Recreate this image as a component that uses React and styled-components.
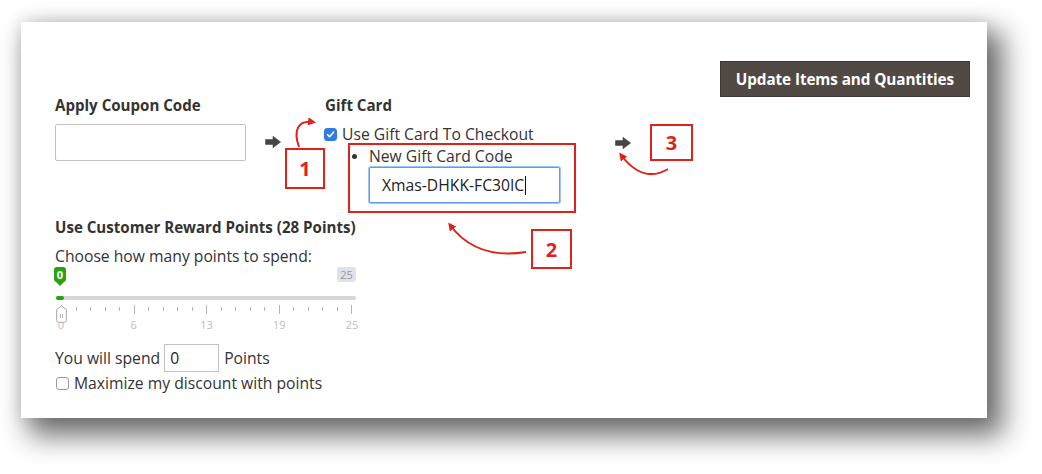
import React from "react";
import styled, { createGlobalStyle } from "styled-components";

const Global = createGlobalStyle`
  html, body { margin: 0; padding: 0; background: #fff; }
  html, body, #root { min-height: 474px; }
  body { font-family: "Open Sans", "Liberation Sans", sans-serif; color: #333; }
`;

const RED = "#e0221c";
const DARK = "#514943";

const Page = styled.div`
  box-sizing: border-box;
  min-height: 474px;
  padding: 22px 0 0 21px;
  overflow: hidden;
`;

const Card = styled.div`
  position: relative;
  width: 966px;
  height: 396px;
  box-sizing: border-box;
  background: #fff;
  padding: 39px 17px 0 34px;
  box-shadow: 12px 14px 26px 4px rgba(0, 0, 0, 0.56), 0 0 16px rgba(0, 0, 0, 0.12);
`;

const TopBar = styled.div`
  display: flex;
  justify-content: flex-end;
  height: 34px;
`;

const PrimaryButton = styled.button`
  height: 36px;
  padding: 0 15px;
  border: 1px solid #3f3833;
  background: ${DARK};
  color: #fff;
  font-family: "Open Sans", sans-serif;
  font-weight: 700;
  font-size: 15.3px;
  letter-spacing: -0.1px;
  cursor: pointer;
`;

const Row = styled.div`
  display: flex;
  align-items: flex-start;
`;

const Column = styled.div`
  display: flex;
  flex-direction: column;
  width: ${(p) => p.$w}px;
  margin-left: ${(p) => p.$ml || 0}px;
`;

const Label = styled.div`
  font-weight: 700;
  font-size: 15.1px;
  line-height: 20px;
  color: #333;
  margin-left: ${(p) => p.$ml || 0}px;
  white-space: nowrap;
`;

const TextInput = styled.div`
  box-sizing: border-box;
  width: ${(p) => p.$w}px;
  height: ${(p) => p.$h}px;
  margin-top: ${(p) => p.$mt || 0}px;
  border: 1px solid ${(p) => (p.$focus ? "#5b9ee8" : "#c2c2c2")};
  box-shadow: ${(p) => (p.$focus ? "0 0 0 1px #9cc6f3" : "none")};
  border-radius: 2px;
  background: #fff;
  font-size: 15.7px;
  display: flex;
  align-items: center;
  padding-left: ${(p) => p.$pl || 10}px;
  color: #222;
`;

const Caret = styled.span`
  display: inline-block;
  width: 1px;
  height: 19px;
  background: #111;
  margin-left: 1px;
`;

const ArrowWrap = styled.div`
  margin-left: ${(p) => p.$ml}px;
  margin-top: ${(p) => p.$mt}px;
  width: 16px;
  height: 12px;
  display: flex;
`;

const Arrow = ({ ml, mt }) => (
  <ArrowWrap $ml={ml} $mt={mt}>
    <svg width="16" height="12" viewBox="0 0 16 12">
      <path d="M0.5 3.6 H8 V0.3 L15.6 6 L8 11.7 V8.4 H0.5 Z" fill="#4a4440" stroke="#4a4440" strokeWidth="0.6" strokeLinejoin="round" />
    </svg>
  </ArrowWrap>
);

const CheckLine = styled.label`
  display: flex;
  align-items: center;
  height: 20px;
  margin-top: ${(p) => p.$mt || 0}px;
  font-size: 15.7px;
  color: #333;
  white-space: nowrap;
`;

const Box = styled.span`
  box-sizing: border-box;
  width: 13px;
  height: 13px;
  border-radius: 3px;
  margin-right: ${(p) => p.$mr}px;
  margin-left: ${(p) => p.$ml || 0}px;
  display: inline-flex;
  align-items: center;
  justify-content: center;
  background: ${(p) => (p.$checked ? "#2f7de2" : "#fff")};
  border: 1px solid ${(p) => (p.$checked ? "#2f7de2" : "#9a9a9a")};
`;

const Check = ({ checked, mr, ml }) => (
  <Box $checked={checked} $mr={mr} $ml={ml}>
    {checked && (
      <svg width="9" height="9" viewBox="0 0 9 9">
        <path d="M1.6 4.7 L3.6 6.7 L7.5 2.2" fill="none" stroke="#fff" strokeWidth="1.6" strokeLinecap="round" strokeLinejoin="round" />
      </svg>
    )}
  </Box>
);

const List = styled.ul`
  margin: 2px 0 0 0;
  padding: 0 0 0 45px;
  list-style: disc;
  font-size: 15.7px;
  color: #333;
`;

const ListItem = styled.li`
  line-height: 20px;
  &::marker { font-size: 14px; }
`;

const Reward = styled.div`
  margin-top: 14px;
  width: 302px;
`;

const Text = styled.div`
  font-size: 15.7px;
  line-height: 20px;
  margin-top: ${(p) => p.$mt || 0}px;
  color: #333;
  white-space: nowrap;
`;

const Slider = styled.div`
  position: relative;
  width: 300px;
  margin-left: 1px;
  margin-top: 1px;
`;

const BadgeRow = styled.div`
  display: flex;
  justify-content: space-between;
  align-items: flex-start;
  height: 17px;
`;

const Badge = styled.span`
  position: relative;
  display: inline-flex;
  align-items: center;
  justify-content: center;
  min-width: ${(p) => p.$w}px;
  height: 15px;
  border-radius: 3px;
  font-size: 11px;
  font-weight: ${(p) => (p.$active ? 700 : 400)};
  background: ${(p) => (p.$active ? "#2aa10f" : "#dfe2e9")};
  color: ${(p) => (p.$active ? "#fff" : "#9a9a9a")};
  margin-left: ${(p) => p.$ml || 0}px;
  ${(p) =>
    p.$active &&
    `&::after {
      content: "";
      position: absolute;
      left: 50%;
      bottom: -4px;
      margin-left: -4px;
      border-left: 4px solid transparent;
      border-right: 4px solid transparent;
      border-top: 4px solid #2aa10f;
    }`}
`;

const Track = styled.div`
  margin-top: 12px;
  height: 4px;
  border-radius: 2px;
  background: #d5d7de;
  display: flex;
`;

const Fill = styled.div`
  height: 4px;
  border-radius: 2px;
  background: #2aa10f;
`;

const Ticks = styled.div`
  display: flex;
  justify-content: space-between;
  align-items: flex-start;
  margin: 5px 4px 0 5px;
  height: 11px;
`;

const Tick = styled.span`
  width: 1px;
  height: ${(p) => (p.$big ? 9 : 4)}px;
  margin-top: ${(p) => (p.$big ? 0 : 2)}px;
  background: #b5b5b5;
`;

const TickLabels = styled.div`
  display: flex;
  justify-content: space-between;
  margin: 3px -6px 0 -5px;
`;

const TickLabel = styled.span`
  width: 20px;
  text-align: center;
  font-size: 11px;
  color: #bdbdbd;
  line-height: 12px;
`;

const Handle = styled.div`
  position: absolute;
  left: 0;
  top: 38px;
  width: 11px;
  height: 18px;
`;

const SpendRow = styled.div`
  display: flex;
  align-items: center;
  margin-top: 13px;
  font-size: 15.7px;
  color: #333;
  white-space: nowrap;
`;

const SmallInput = styled.div`
  box-sizing: border-box;
  width: 55px;
  height: 28px;
  border: 1px solid #c2c2c2;
  margin: 0 5px 0 4px;
  padding-left: 5px;
  display: flex;
  align-items: center;
  font-size: 15.7px;
  color: #222;
`;

const Annotation = styled.div`
  position: absolute;
  box-sizing: border-box;
  left: ${(p) => p.$x}px;
  top: ${(p) => p.$y}px;
  width: ${(p) => p.$w}px;
  height: ${(p) => p.$h}px;
  border: 2px solid ${RED};
  display: flex;
  align-items: center;
  justify-content: center;
  color: ${RED};
  font-weight: 700;
  font-size: 20px;
  font-family: "Open Sans", sans-serif;
  pointer-events: none;
`;

const Overlay = styled.svg`
  position: absolute;
  left: 0;
  top: 0;
  pointer-events: none;
`;

const ticks = Array.from({ length: 21 }, (_, i) => i);

export default function App() {
  return (
    <Page>
      <Global />
      <Card>
        <TopBar>
          <PrimaryButton>Update Items and Quantities</PrimaryButton>
        </TopBar>
        <Row>
          <Column $w={190}>
            <Label>Apply Coupon Code</Label>
            <TextInput $w={191} $h={37} $mt={9} />
          </Column>
          <Arrow ml={20} mt={41} />
          <Column $w={236} $ml={43}>
            <Label $ml={1}>Gift Card</Label>
            <CheckLine $mt={9}>
              <Check checked mr={5} />
              Use Gift Card To Checkout
            </CheckLine>
            <List>
              <ListItem>
                New Gift Card Code
                <TextInput $w={191} $h={36} $mt={1} $focus $pl={12}>
                  Xmas-DHKK-FC30IC
                  <Caret />
                </TextInput>
              </ListItem>
            </List>
          </Column>
          <Arrow ml={55} mt={42} />
        </Row>
        <Reward>
          <Label>Use Customer Reward Points (28 Points)</Label>
          <Text $mt={9}>Choose how many points to spend:</Text>
          <Slider>
            <BadgeRow>
              <Badge $active $w={12} $ml={-2}>0</Badge>
              <Badge $w={19}>25</Badge>
            </BadgeRow>
            <Track>
              <Fill style={{ width: 8 }} />
            </Track>
            <Ticks>
              {ticks.map((i) => (
                <Tick key={i} $big={i % 5 === 0} />
              ))}
            </Ticks>
            <TickLabels>
              {["0", "6", "13", "19", "25"].map((l) => (
                <TickLabel key={l}>{l}</TickLabel>
              ))}
            </TickLabels>
            <Handle>
              <svg width="11" height="18" viewBox="0 0 11 18">
                <path d="M5.5 0.8 L10.3 4.5 V15.5 Q10.3 17.3 8.5 17.3 H2.5 Q0.7 17.3 0.7 15.5 V4.5 Z" fill="#fff" stroke="#a8a8a8" strokeWidth="1" />
                <path d="M4.5 9 V13 M6.5 9 V13" stroke="#b5b5b5" strokeWidth="1" />
              </svg>
            </Handle>
          </Slider>
          <SpendRow>
            You will spend
            <SmallInput>0</SmallInput>
            Points
          </SpendRow>
          <CheckLine $mt={1}>
            <Check ml={1} mr={5} />
            Maximize my discount with points
          </CheckLine>
        </Reward>

        <Annotation $x={264} $y={126} $w={40} $h={41}>1</Annotation>
        <Annotation $x={327} $y={121} $w={228} $h={70} />
        <Annotation $x={510} $y={207} $w={41} $h={40}>2</Annotation>
        <Annotation $x={629} $y={102} $w={43} $h={37}>3</Annotation>

        <Overlay width="966" height="396" viewBox="0 0 966 396">
          <defs>
            <marker id="ah" markerWidth="8" markerHeight="8" refX="5" refY="4" orient="auto" markerUnits="userSpaceOnUse">
              <path d="M0 0 L8 4 L0 8 Z" fill={RED} />
            </marker>
          </defs>
          <path d="M278 125 C 272 108, 277 98, 292 100" fill="none" stroke={RED} strokeWidth="2" markerEnd="url(#ah)" />
          <path d="M505 230 Q 455 238 429 203" fill="none" stroke={RED} strokeWidth="2" markerEnd="url(#ah)" />
          <path d="M647 147 Q 622 162 600 133" fill="none" stroke={RED} strokeWidth="2" markerEnd="url(#ah)" />
        </Overlay>
      </Card>
    </Page>
  );
}
